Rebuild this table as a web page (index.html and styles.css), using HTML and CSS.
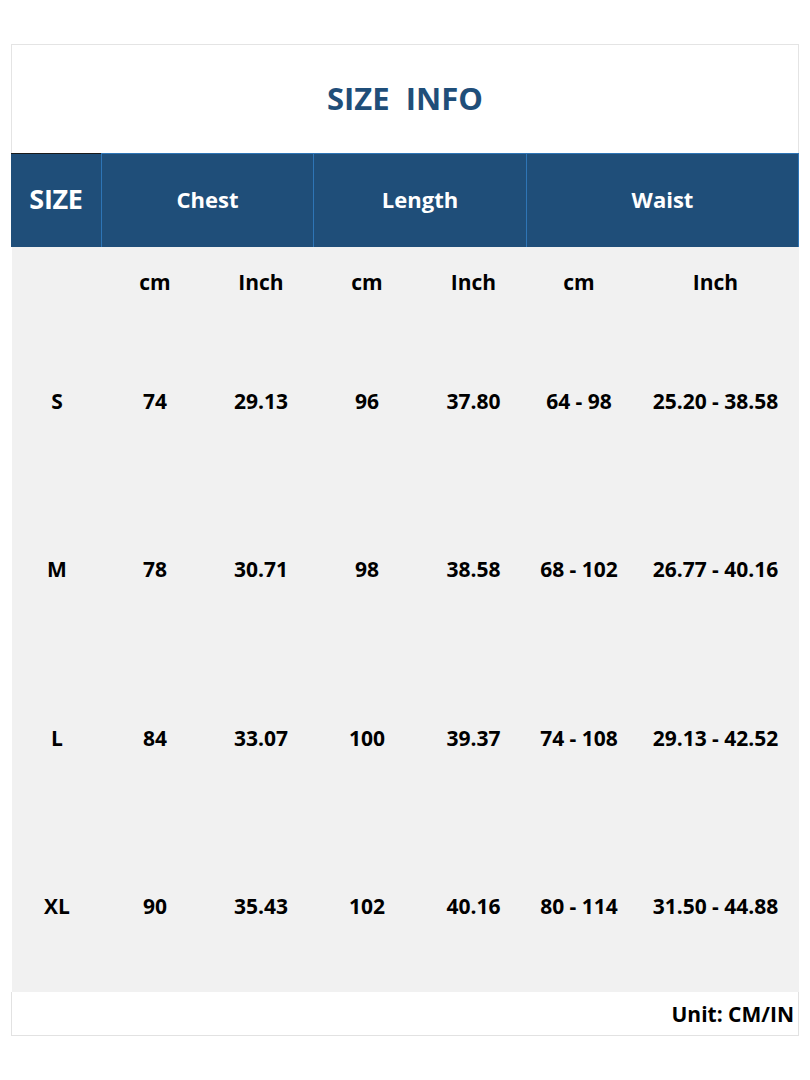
FILE: index.html
```html
<!DOCTYPE html>
<html>
<head>
<meta charset="utf-8">
<link rel="stylesheet" href="styles.css">
</head>
<body>
<div class="sheet">
  <div class="title">SIZE&nbsp;&nbsp;INFO</div>
  <div class="head">
    <div class="hcell first">SIZE</div>
    <div class="hcell">Chest</div>
    <div class="hcell">Length</div>
    <div class="hcell last">Waist</div>
  </div>
  <div class="body">
    <div class="c"></div><div class="c">cm</div><div class="c">Inch</div><div class="c">cm</div><div class="c">Inch</div><div class="c">cm</div><div class="c">Inch</div>
    <div class="c">S</div><div class="c">74</div><div class="c">29.13</div><div class="c">96</div><div class="c">37.80</div><div class="c">64 - 98</div><div class="c">25.20 - 38.58</div>
    <div class="c">M</div><div class="c">78</div><div class="c">30.71</div><div class="c">98</div><div class="c">38.58</div><div class="c">68 - 102</div><div class="c">26.77 - 40.16</div>
    <div class="c">L</div><div class="c">84</div><div class="c">33.07</div><div class="c">100</div><div class="c">39.37</div><div class="c">74 - 108</div><div class="c">29.13 - 42.52</div>
    <div class="c">XL</div><div class="c">90</div><div class="c">35.43</div><div class="c">102</div><div class="c">40.16</div><div class="c">80 - 114</div><div class="c">31.50 - 44.88</div>
  </div>
  <div class="foot">Unit: CM/IN</div>
</div>
</body>
</html>
```
FILE: styles.css
```css
html, body {
  margin: 0;
  padding: 0;
  background: #ffffff;
}
body {
  font-family: "Open Sans", "Noto Sans", sans-serif;
  font-weight: 700;
  color: #000000;
}
.sheet {
  margin: 44px 0 0 11px;
  width: 788px;
}
.title {
  height: 109px;
  border: 1px solid #e4e4e4;
  border-bottom: none;
  display: flex;
  align-items: center;
  justify-content: center;
  color: #1f4e79;
  font-size: 31px;
  padding-bottom: 2px;
  box-sizing: border-box;
}
.head {
  display: grid;
  grid-template-columns: 90px 212px 213px 273px;
  height: 94px;
  background: #1f4e79;
}
.hcell {
  display: flex;
  align-items: center;
  justify-content: center;
  color: #ffffff;
  font-size: 22px;
  padding-bottom: 4px;
  border-top: 1px solid #2e75b6;
  border-left: 1px solid #2e75b6;
}
.hcell.first {
  border-top: 1px solid #1a1a1a;
  border-left: none;
  font-size: 27px;
  letter-spacing: -0.3px;
}
.hcell.last {
  border-right: 1px solid #2e75b6;
}
.body {
  display: grid;
  grid-template-columns: 90px 106px 106px 106px 107px 104px 169px;
  grid-template-rows: 70px 168px 168px 169px 168px;
  height: 745px;
  background: #f1f1f1;
  margin-left: 1px;
}
.c {
  display: flex;
  align-items: center;
  justify-content: center;
  font-size: 21px;
  white-space: pre;
}
.foot {
  height: 43px;
  border: 1px solid #e2e2e2;
  border-top: none;
  display: flex;
  align-items: center;
  justify-content: flex-end;
  padding-right: 4px;
  font-size: 21px;
}
```
